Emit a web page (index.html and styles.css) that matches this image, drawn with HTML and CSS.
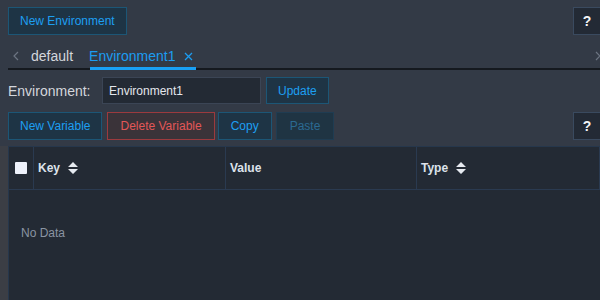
FILE: index.html
```html
<!DOCTYPE html>
<html lang="en">
<head>
  <meta charset="UTF-8">
  <meta name="viewport" content="width=device-width, initial-scale=1.0">
  <title>Environments</title>
  <link rel="stylesheet" href="styles.css">
</head>
<body>
<div class="page">

  <div class="toolbar">
    <button class="btn">New Environment</button>
    <button class="help">?</button>
  </div>

  <!-- environment tabs -->
  <div class="tabs">
    <span class="tab-arrow">
      <svg width="6" height="10" viewBox="0 0 6 10"><path d="M5 1 L1 5 L5 9" fill="none" stroke="#6c7482" stroke-width="1.2"/></svg>
    </span>
    <span class="tab">default</span>
    <span class="tab active">Environment1 <span class="close">
      <svg width="9" height="9" viewBox="0 0 9 9"><path d="M1 1 L8 8 M8 1 L1 8" stroke="#1c9cf0" stroke-width="1.3"/></svg>
    </span></span>
    <span class="tab-arrow right">
      <svg width="6" height="10" viewBox="0 0 6 10"><path d="M1 1 L5 5 L1 9" fill="none" stroke="#6c7482" stroke-width="1.2"/></svg>
    </span>
  </div>

  <div class="env-row">
    <label class="env-label">Environment:</label>
    <input class="env-input" type="text" value="Environment1">
    <button class="btn">Update</button>
  </div>

  <div class="toolbar">
    <div class="btn-group">
      <button class="btn">New Variable</button>
      <button class="btn danger">Delete Variable</button>
      <button class="btn copy">Copy</button>
      <button class="btn disabled">Paste</button>
    </div>
    <button class="help">?</button>
  </div>

  <div class="table">
    <div class="thead">
      <div class="th check"><span class="checkbox"></span></div>
      <div class="th">Key <svg class="sort" width="10" height="12" viewBox="0 0 10 12"><path d="M5 0 L10 5 L0 5 Z M0 7 L10 7 L5 12 Z" fill="#e6eaf0"/></svg></div>
      <div class="th">Value</div>
      <div class="th">Type <svg class="sort" width="10" height="12" viewBox="0 0 10 12"><path d="M5 0 L10 5 L0 5 Z M0 7 L10 7 L5 12 Z" fill="#e6eaf0"/></svg></div>
    </div>
    <div class="tbody">
      <div class="empty">No Data</div>
    </div>
  </div>

</div>
</body>
</html>
```

FILE: styles.css
```css
html, body {
  margin: 0;
  height: 100%;
  overflow: hidden;
  background-color: #333a46;
}
body {
  font-family: "Liberation Sans", Arial, sans-serif;
}
.page {
  width: 593px;
  padding: 7px 8px 0;
}
.toolbar {
  display: flex;
  justify-content: space-between;
  align-items: center;
}
.btn-group {
  display: flex;
  gap: 4px;
}
.btn {
  height: 28px;
  padding: 0 11px;
  font-family: inherit;
  font-size: 12px;
  color: #1d9ff2;
  background-color: #1e3445;
  border: 1px solid #1c5676;
  cursor: pointer;
}
.btn.danger {
  margin-left: 1px;
  padding: 0 12px;
  color: #e25757;
  background-color: #3a3339;
  border-color: #9c3a3e;
}
.btn.copy {
  margin-left: -1px;
  padding: 0 12px;
}
.btn.disabled {
  padding: 0 13px;
  color: #2b6a92;
  background-color: #1f3443;
  border-color: #1f3c52;
}
.help {
  width: 28px;
  height: 28px;
  padding: 0;
  font-family: inherit;
  font-size: 14px;
  font-weight: bold;
  color: #f2f4f7;
  background-color: #232a35;
  border: 1px solid #3a4a5f;
}
.tabs {
  display: flex;
  align-items: center;
  height: 32px;
  margin-top: 1px;
  border-bottom: 2px solid #15191f;
}
.tab-arrow {
  display: flex;
  align-items: center;
  box-sizing: border-box;
  padding: 8px 12px 0 5px;
  height: 100%;
}
.tab-arrow.right {
  margin-left: auto;
  padding: 8px 0 0 6px;
}
.tab {
  display: flex;
  align-items: center;
  height: 100%;
  font-size: 14px;
  color: #d3d6dc;
  margin-right: 16px;
  box-sizing: border-box;
  padding-top: 8px;
}
.tab.active {
  color: #1c9cf0;
  position: relative;
  padding-right: 3px;
}
.tab.active::after {
  content: "";
  position: absolute;
  left: 1px;
  right: 0;
  bottom: -2px;
  height: 3px;
  background-color: #19a0f4;
}
.close {
  display: flex;
  margin-left: 9px;
}
.env-row {
  display: flex;
  align-items: center;
  margin-top: 7px;
  gap: 5px;
}
.env-label {
  font-size: 14px;
  color: #d3d6dc;
  width: 89px;
}
.env-input {
  width: 159px;
  height: 27px;
  box-sizing: border-box;
  padding: 0 6px;
  font-family: inherit;
  font-size: 12px;
  color: #e4e7ec;
  background-color: #232a34;
  border: 1px solid #3b4555;
}
.env-row .btn {
  height: 27px;
}
.env-row + .toolbar {
  margin-top: 8px;
}
.table {
  margin-top: 6px;
  height: 160px;
  background-color: #232a34;
  border: 1px solid #26374c;
  box-shadow: -8px 0 0 #3b3e45;
}
.thead {
  display: grid;
  grid-template-columns: 25px 192px 191px 1fr;
  height: 42px;
  border-bottom: 1px solid #2a3a50;
}
.th {
  display: flex;
  align-items: center;
  padding-left: 4px;
  font-size: 12px;
  font-weight: bold;
  color: #dde2ea;
  border-right: 1px solid #2a3a50;
}
.th.check {
  padding-left: 6px;
}
.checkbox {
  width: 12px;
  height: 12px;
  border-radius: 1px;
  background-color: #eef2fb;
}
.sort {
  margin-left: 8px;
}
.empty {
  padding: 36px 12px;
  font-size: 12px;
  color: #8a94a2;
}
```
